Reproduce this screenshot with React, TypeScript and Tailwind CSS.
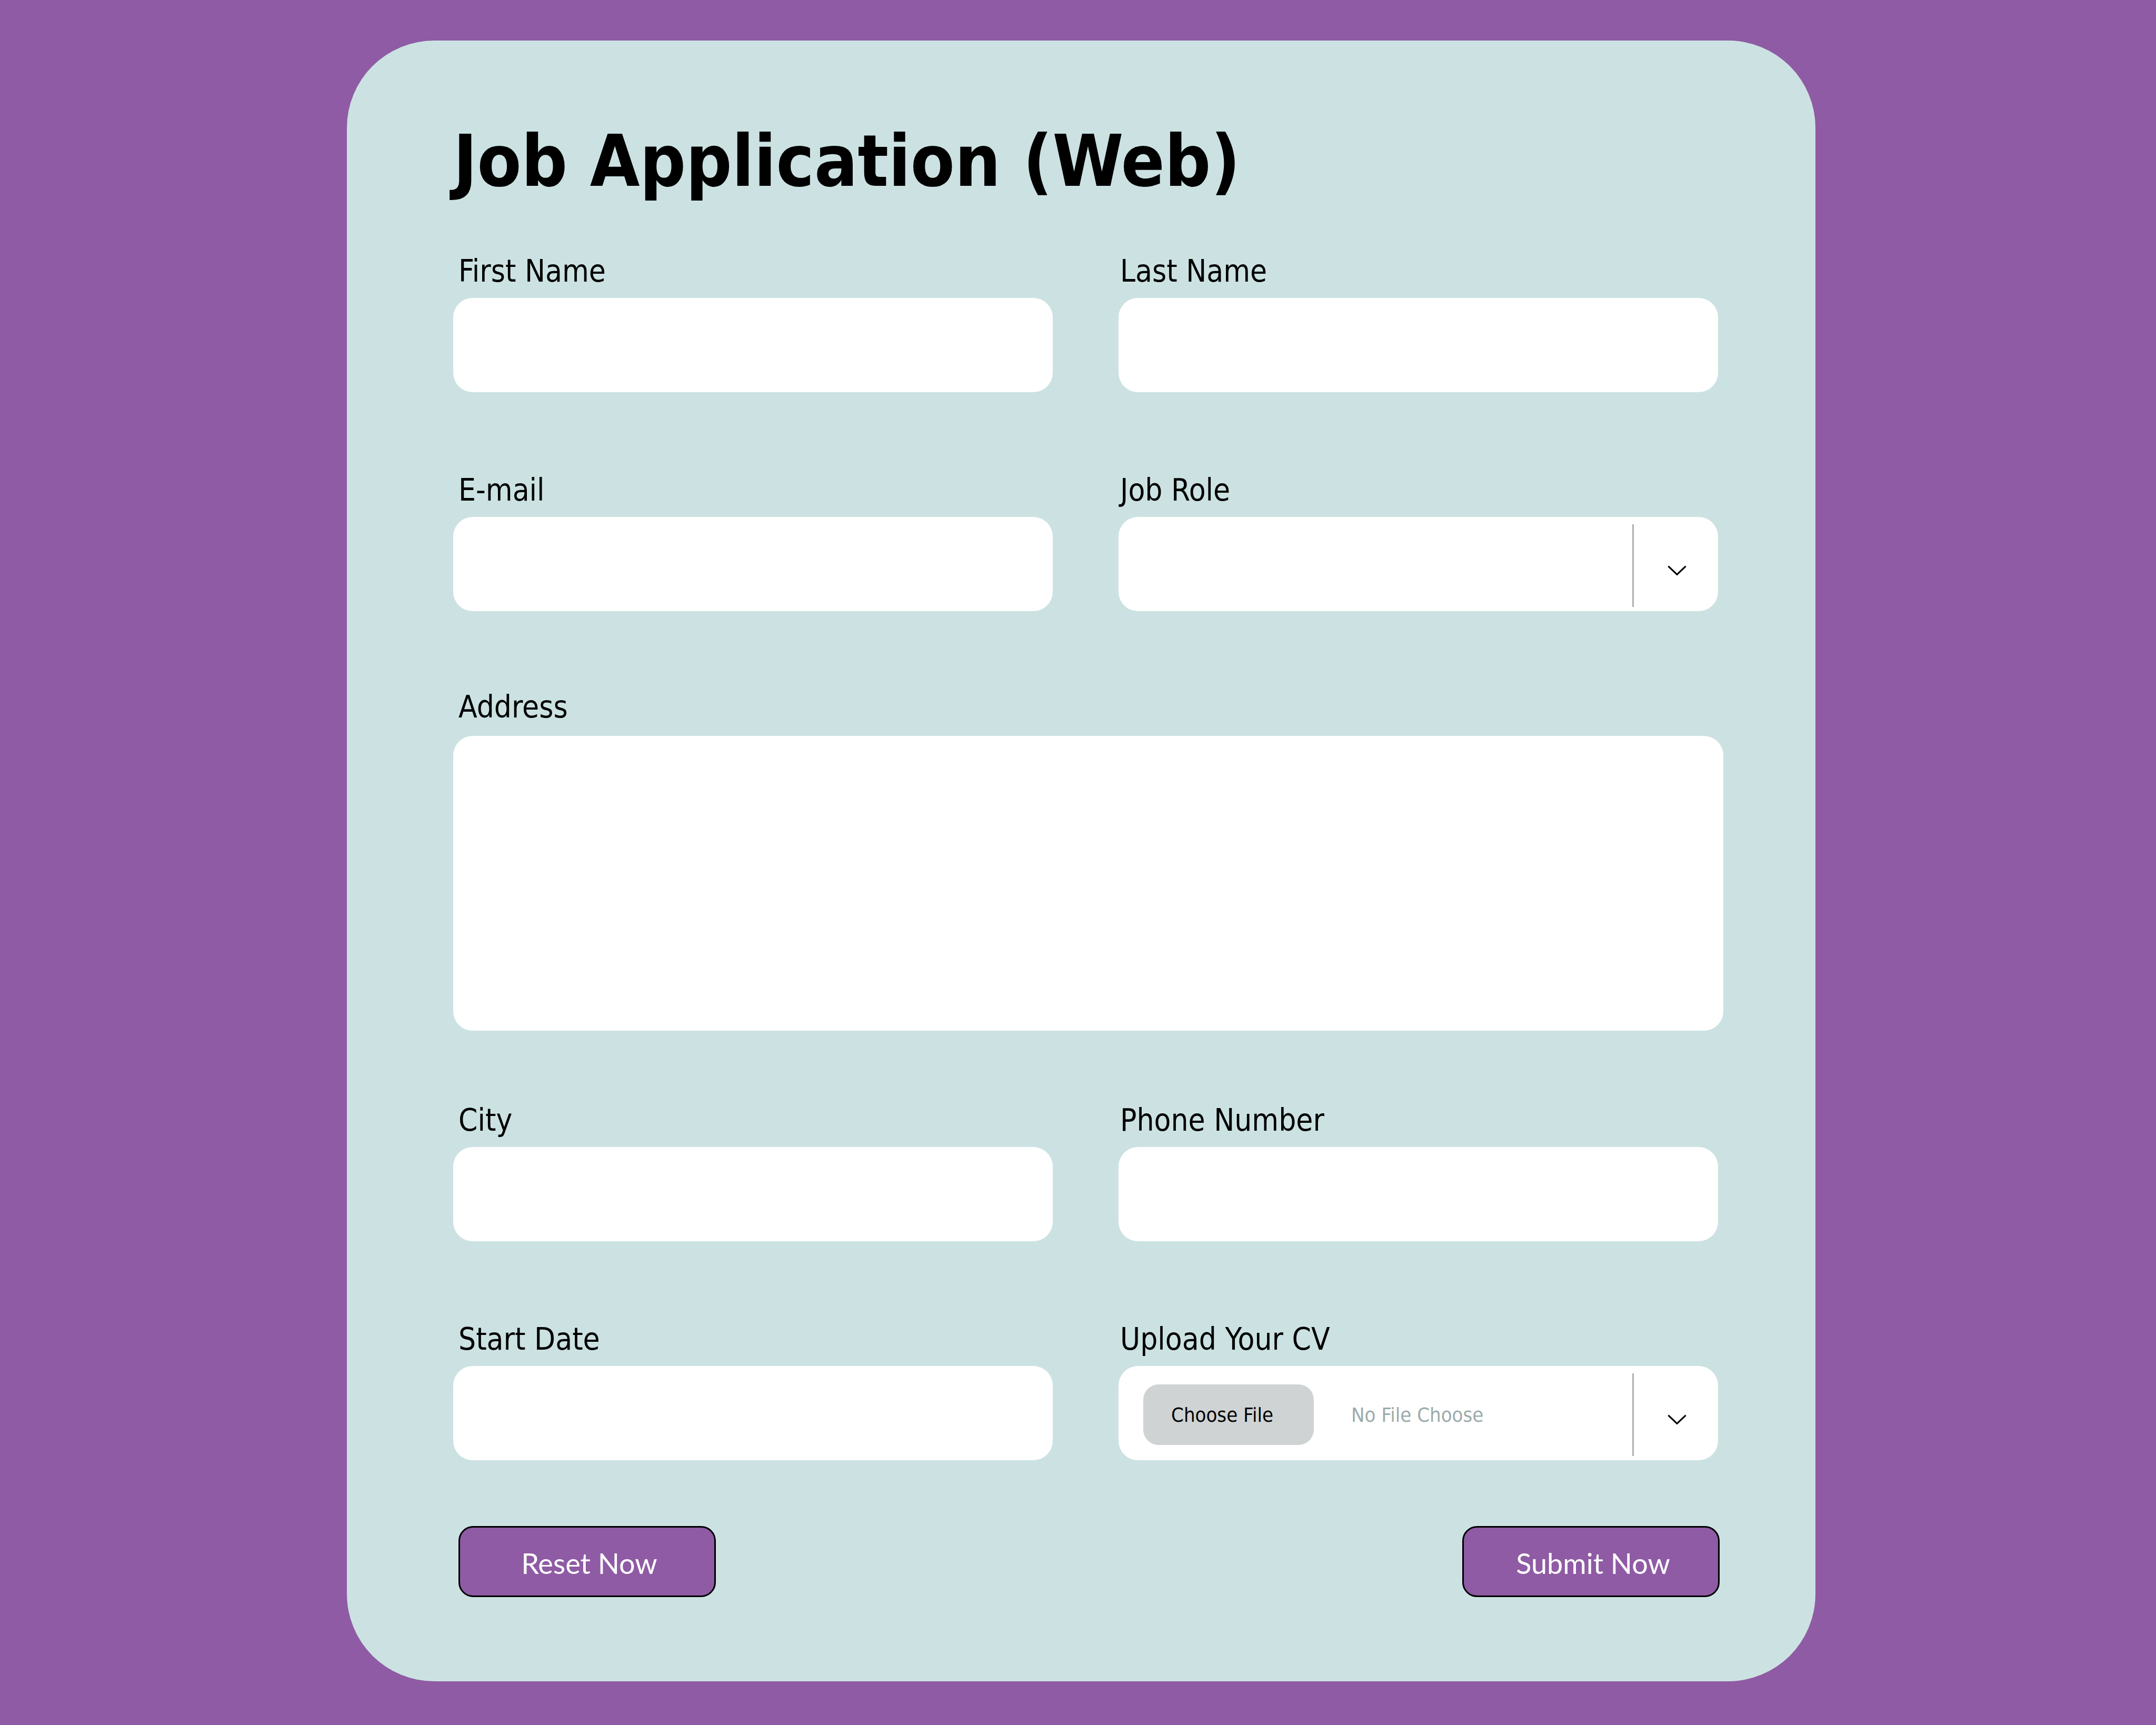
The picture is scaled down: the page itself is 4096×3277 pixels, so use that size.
import { useState } from "react";
import type { ReactNode } from "react";

const control =
  "block h-[179px] w-full rounded-[37px] bg-white px-[40px] text-[58px] text-black outline-none";

function Label({ id, inset, children }: { id: string; inset: string; children: ReactNode }) {
  return (
    <label htmlFor={id} className={`block text-[58px] leading-[68px] text-black ${inset}`}>
      {children}
    </label>
  );
}

function Field({
  id,
  label,
  inset,
  children,
}: {
  id: string;
  label: string;
  inset: string;
  children?: ReactNode;
}) {
  return (
    <div className="flex min-w-0 flex-col gap-[17px]">
      <Label id={id} inset={inset}>
        {label}
      </Label>
      {children ?? <input id={id} name={id} type="text" className={control} />}
    </div>
  );
}

function DropIndicator() {
  return (
    <>
      <span className="h-[157px] w-[3px] bg-[#b0b0b0]" />
      <span className="flex flex-1 justify-center pt-[18px] pl-[4px]">
        <svg
          viewBox="0 0 36 20"
          className="h-[20px] w-[36px]"
          fill="none"
          stroke="#000"
          strokeWidth="3.2"
        >
          <path d="M1.4 1.6 18 17.4 34.6 1.6" />
        </svg>
      </span>
    </>
  );
}

function JobRoleSelect() {
  return (
    <div className="relative">
      <select id="role" name="role" defaultValue="" className={`${control} appearance-none`}>
        <option value=""></option>
        <option value="designer">Designer</option>
        <option value="developer">Developer</option>
      </select>
      <div className="pointer-events-none absolute inset-y-0 right-0 flex w-[163px] items-center pt-[6px]">
        <DropIndicator />
      </div>
    </div>
  );
}

function CvUpload() {
  const [fileName, setFileName] = useState("No File Choose");
  return (
    <div className="relative flex h-[179px] items-center rounded-[37px] bg-white pt-[6px] pl-[47px]">
      <input
        id="cv"
        name="cv"
        type="file"
        className="sr-only"
        onChange={(e) => setFileName(e.target.files?.[0]?.name ?? "No File Choose")}
      />
      <label
        htmlFor="cv"
        className="flex h-[115px] w-[324px] items-center rounded-[29px] bg-[#cfd3d4] pl-[53px] text-[38px] leading-[44px] text-black"
      >
        Choose File
      </label>
      <span className="ml-[71px] flex-1 text-[38px] leading-[44px] text-[#9aabaa]">{fileName}</span>
      <button type="button" aria-label="Upload options" className="flex w-[163px] items-center">
        <DropIndicator />
      </button>
    </div>
  );
}

const action =
  "h-[135px] w-[489px] rounded-[28px] border-[3px] border-black bg-[#8f5ba4] pt-[6px] pl-[8px] font-[Lato,sans-serif] text-[54px] leading-[64px] text-white";

export default function App() {
  const left = "pl-[10px]";
  const right = "pl-[3px]";
  return (
    <main className="min-h-screen bg-[#8f5ba4] pt-[77px] pr-[647px] pb-[83px] pl-[659px] font-['DejaVu_Sans_Condensed','DejaVu_Sans',sans-serif]">
      <form className="rounded-[166px] bg-[#cce2e2] pt-[149px] pr-[185px] pb-[160px] pl-[202px]">
        <h1 className="text-[136px] leading-[160px] font-bold text-black">Job Application (Web)</h1>

        <div className="mt-[95px] grid grid-cols-2 gap-x-[125px] gap-y-[152px]">
          <Field id="first-name" label="First Name" inset={left} />
          <Field id="last-name" label="Last Name" inset={right} />
          <Field id="email" label="E-mail" inset={left} />
          <Field id="role" label="Job Role" inset={right}>
            <JobRoleSelect />
          </Field>
        </div>

        <div className="mt-[148px] -mr-[10px] flex flex-col gap-[21px]">
          <Label id="address" inset={left}>
            Address
          </Label>
          <textarea
            id="address"
            name="address"
            className="block h-[560px] resize-none rounded-[37px] bg-white p-[40px] text-[58px] text-black outline-none"
          />
        </div>

        <div className="mt-[136px] grid grid-cols-2 gap-x-[125px] gap-y-[152px]">
          <Field id="city" label="City" inset={left} />
          <Field id="phone" label="Phone Number" inset={right} />
          <Field id="start-date" label="Start Date" inset={left} />
          <Field id="cv" label="Upload Your CV" inset={right}>
            <CvUpload />
          </Field>
        </div>

        <div className="mt-[125px] -mr-[3px] flex justify-between pl-[10px]">
          <button type="reset" className={action}>
            Reset Now
          </button>
          <button type="submit" className={action}>
            Submit Now
          </button>
        </div>
      </form>
    </main>
  );
}
